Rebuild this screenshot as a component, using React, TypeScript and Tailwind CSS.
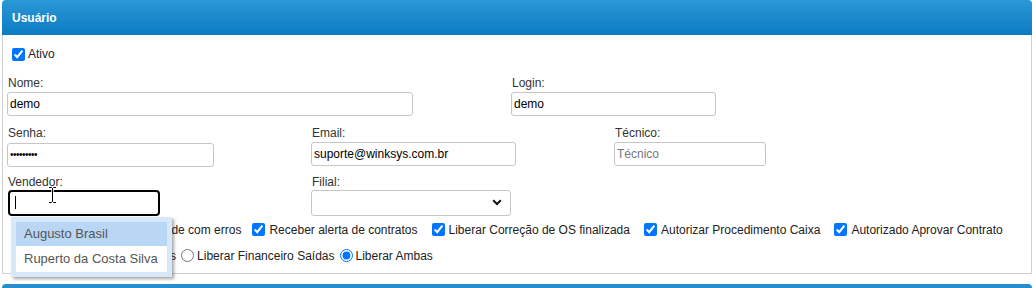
import React from "react";

const font = "font-['Liberation_Sans',Arial,sans-serif]";

function Label({ children }: { children: React.ReactNode }) {
  return <div className="h-[16px] leading-[16px] text-[12px] text-[#333] pl-[1px]">{children}</div>;
}

function TextBox({ value, width, placeholder, type = "text" }: { value?: string; width: string; placeholder?: string; type?: string }) {
  return (
    <input
      type={type}
      defaultValue={value}
      placeholder={placeholder}
      readOnly
      className={`${width} h-[24px] border border-[#c6c6c6] rounded-[3px] px-[2px] text-[12px] text-black bg-white placeholder:text-[#777] outline-none`}
    />
  );
}

function Check({ children, last, first }: { children: React.ReactNode; last?: boolean; first?: boolean }) {
  return (
    <label className={`flex items-center h-[16px] ${last ? "" : first ? "mr-[7px]" : "mr-[10px]"}`}>
      <input type="checkbox" defaultChecked className="ml-[4px] mr-[4px] w-[13px] h-[13px] accent-[#0075ff]" />
      <span className="text-[12px] text-[#222] whitespace-nowrap">{children}</span>
    </label>
  );
}

function Radio({ children, checked }: { children: React.ReactNode; checked?: boolean }) {
  return (
    <label className="flex items-center h-[16px]">
      <input type="radio" name="fin" defaultChecked={checked} className="ml-[5px] mr-[3px] w-[13px] h-[13px] accent-[#0075ff]" />
      <span className="text-[12px] text-[#222] whitespace-nowrap">{children}</span>
    </label>
  );
}

export default function App() {
  return (
    <div className={`${font} w-[1036px] h-[288px] overflow-hidden bg-white pl-[2px] pr-[4px]`}>
      <div className="border border-[#cfcfcf] rounded-t-[4px]">
        <div className="h-[35px] -mx-[1px] -mt-[1px] rounded-t-[4px] bg-gradient-to-b from-[#2a97d7] to-[#0a7bc2] flex items-center px-[10px]">
          <span className="text-white font-bold text-[12px]">Usuário</span>
        </div>
        <div className="px-[4px] pb-[9px]">
          <div className="mt-[11px] h-[16px] flex items-center">
            <input type="checkbox" defaultChecked className="ml-[5px] mr-[3px] w-[13px] h-[13px] accent-[#0075ff]" />
            <span className="text-[12px] text-[#222]">Ativo</span>
          </div>

          <div className="mt-[13px] flex mb-[9px]">
            <div className="w-[504px]">
              <Label>Nome:</Label>
              <TextBox value="demo" width="w-[406px]" />
            </div>
            <div>
              <Label>Login:</Label>
              <TextBox value="demo" width="w-[205px]" />
            </div>
          </div>

          <div className="flex mb-[7px]">
            <div className="w-[304px]">
              <Label>Senha:</Label>
              <input
                type="password"
                defaultValue="demodemo1"
                readOnly
                className="w-[207px] h-[24px] border border-[#c6c6c6] rounded-[3px] px-[2px] text-[10px] tracking-[-0.5px] text-black bg-white outline-none"
              />
            </div>
            <div className="w-[303px]">
              <Label>Email:</Label>
              <TextBox value="suporte@winksys.com.br" width="w-[205px]" />
            </div>
            <div>
              <Label>Técnico:</Label>
              <TextBox placeholder="Técnico" width="w-[152px]" />
            </div>
          </div>

          <div className="flex">
            <div className="w-[304px] relative">
              <Label>Vendedor:</Label>
              <div className="ml-[1px] w-[152px] h-[26px] border-2 border-black rounded-[4px] flex items-center pl-[5px]">
                <div className="w-[1px] h-[13px] bg-black" />
              </div>
              <svg className="absolute left-[41px] top-[12px]" width="9" height="18" viewBox="0 0 9 18">
                <path d="M1 1.5h2.5l1 1 1-1H8M4.5 2.5v13M1 16.5h2.5l1-1 1 1H8" stroke="#fff" strokeWidth="2.5" fill="none" />
                <path d="M1 1.5h2.5l1 1 1-1H8M4.5 2.5v13M1 16.5h2.5l1-1 1 1H8" stroke="#000" strokeWidth="1" fill="none" />
              </svg>
              <div className="absolute left-[4px] top-[43px] w-[161px] z-10 bg-[#d9e8f8] p-[5px] shadow-[2px_2px_3px_rgba(0,0,0,0.35)]">
                <div className="bg-white">
                  <div className="h-[24px] leading-[24px] bg-[#b9d6f4] pl-[8px] text-[13px] text-[#555]">Augusto Brasil</div>
                  <div className="h-[26px] leading-[26px] pl-[8px] text-[13px] text-[#555] whitespace-nowrap">Ruperto da Costa Silva</div>
                </div>
              </div>
            </div>
            <div>
              <Label>Filial:</Label>
              <div className="w-[200px] h-[26px] border border-[#c6c6c6] rounded-[3px] bg-white flex items-center justify-end pr-[8px]">
                <svg width="10" height="7" viewBox="0 0 10 7">
                  <path d="M1.2 1.3 5 5 8.8 1.3" stroke="#111" strokeWidth="2" fill="none" />
                </svg>
              </div>
            </div>
          </div>

          <div className="mt-[6px] flex items-center">
            <Check first>Liberar Faturamento Unidade com erros</Check>
            <Check>Receber alerta de contratos</Check>
            <Check>Liberar Correção de OS finalizada</Check>
            <Check>Autorizar Procedimento Caixa</Check>
            <Check last>Autorizado Aprovar Contrato</Check>
          </div>

          <div className="mt-[10px] flex items-center">
            <Radio>Liberar Financeiro Entradas</Radio>
            <Radio>Liberar Financeiro Saídas</Radio>
            <Radio checked>Liberar Ambas</Radio>
          </div>
        </div>
      </div>
      <div className="mt-[10px] h-[35px] rounded-t-[4px] bg-gradient-to-b from-[#2a8fce] to-[#0a7bc2]" />
    </div>
  );
}
